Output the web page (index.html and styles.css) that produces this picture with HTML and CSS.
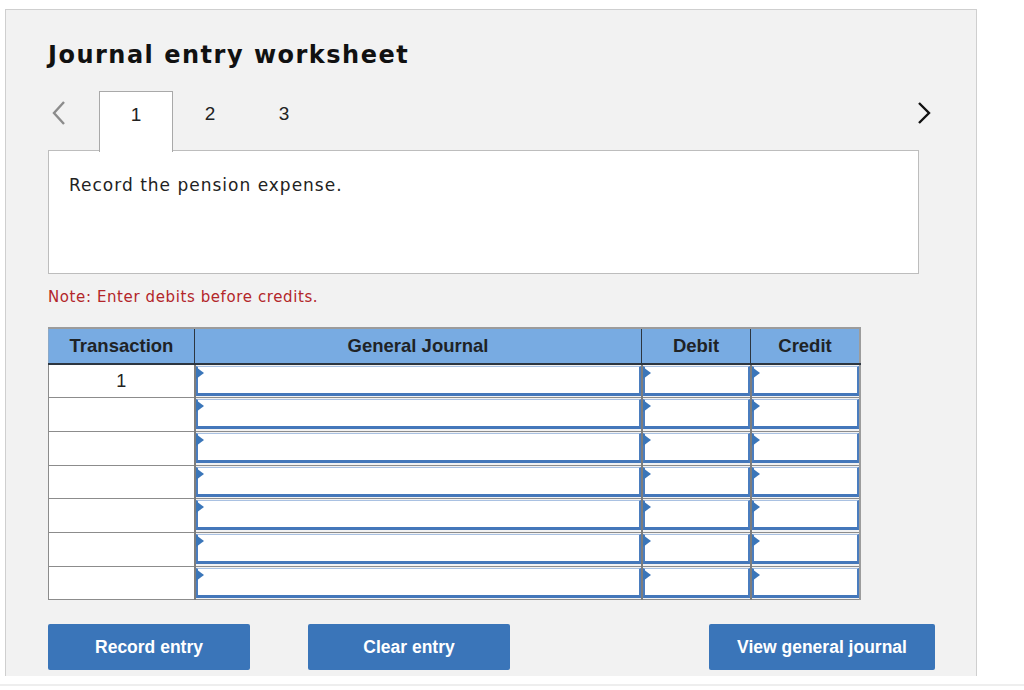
FILE: index.html
```html
<!DOCTYPE html>
<html>
<head>
<meta charset="utf-8">
<title>Journal entry worksheet</title>
<link rel="stylesheet" href="styles.css">
</head>
<body>
<div class="panel">
  <h1 class="title">Journal entry worksheet</h1>

  <div class="tabs">
    <span class="nav nav_prev">
      <svg width="18" height="26" viewBox="0 0 18 26"><path d="M14 2 L4 13 L14 24" fill="none" stroke="#8c8c8c" stroke-width="2.4"/></svg>
    </span>
    <span class="tab tab_on">1</span>
    <span class="tab">2</span>
    <span class="tab">3</span>
    <span class="nav nav_next">
      <svg width="16" height="24" viewBox="0 0 16 24"><path d="M3 2 L13 12 L3 22" fill="none" stroke="#111" stroke-width="2.4"/></svg>
    </span>
  </div>

  <div class="question">Record the pension expense.</div>

  <p class="note">Note: Enter debits before credits.</p>

  <table class="journal">
    <thead>
      <tr>
        <th class="c_trans">Transaction</th>
        <th class="c_gj">General Journal</th>
        <th class="c_amt">Debit</th>
        <th class="c_amt">Credit</th>
      </tr>
    </thead>
    <tbody>
      <tr><td class="trans">1</td><td class="entry"><div class="field"></div></td><td class="entry"><div class="field"></div></td><td class="entry"><div class="field"></div></td></tr>
      <tr><td class="trans"></td><td class="entry"><div class="field"></div></td><td class="entry"><div class="field"></div></td><td class="entry"><div class="field"></div></td></tr>
      <tr><td class="trans"></td><td class="entry"><div class="field"></div></td><td class="entry"><div class="field"></div></td><td class="entry"><div class="field"></div></td></tr>
      <tr><td class="trans"></td><td class="entry"><div class="field"></div></td><td class="entry"><div class="field"></div></td><td class="entry"><div class="field"></div></td></tr>
      <tr><td class="trans"></td><td class="entry"><div class="field"></div></td><td class="entry"><div class="field"></div></td><td class="entry"><div class="field"></div></td></tr>
      <tr><td class="trans"></td><td class="entry"><div class="field"></div></td><td class="entry"><div class="field"></div></td><td class="entry"><div class="field"></div></td></tr>
      <tr><td class="trans"></td><td class="entry"><div class="field"></div></td><td class="entry"><div class="field"></div></td><td class="entry"><div class="field"></div></td></tr>
    </tbody>
  </table>

  <div class="buttons">
    <button class="btn btn_record" type="button">Record entry</button>
    <button class="btn btn_clear" type="button">Clear entry</button>
    <button class="btn btn_view" type="button">View general journal</button>
  </div>
</div>
<div class="page_rule"></div>
</body>
</html>
```

FILE: styles.css
```css
body {
	margin:0;
	background:#fff;
	font-family:"DejaVu Sans", Verdana, sans-serif;
	color:#111;
}
.panel {
	margin:9px 0 0 5px;
	width:928px;
	height:624px;
	padding:0 0 42px 42px;
	background:#f2f2f2;
	border:1px solid #cfcfcf;
	border-bottom:0;
}
.title {
	margin:0;
	padding-top:30px;
	font-size:24px;
	font-weight:bold;
	line-height:30px;
	letter-spacing:1.5px;
	color:#111;
}
.tabs {
	display:flex;
	align-items:flex-start;
	margin-top:21px;
	width:872px;
	height:60px;
}
.nav { display:flex; }
.nav_prev { margin-left:2px; width:49px; padding-top:9px; }
.nav_next { margin-left:auto; margin-right:-12px; padding-top:10px; }
.tab {
	width:74px;
	height:60px;
	line-height:46px;
	text-align:center;
	font-family:"Liberation Sans", Arial, sans-serif;
	font-size:19px;
	color:#222;
	box-sizing:border-box;
}
.tab_on {
	background:#fff;
	border:1px solid #a9a9a9;
	border-bottom:0;
	position:relative;
	z-index:1;
	height:61px;
}
.question {
	margin-top:-1px;
	width:849px;
	height:98px;
	padding:24px 0 0 20px;
	background:#fff;
	border:1px solid #bdbdbd;
	font-size:17px;
	letter-spacing:1px;
	color:#222;
}
.note {
	margin:13px 0 0;
	font-size:15px;
	line-height:20px;
	letter-spacing:0.6px;
	color:#b3262a;
}
.journal {
	margin-top:20px;
	border-collapse:collapse;
	border-top:2px solid #9c9c9c;
	border-right:2px solid #9c9c9c;
	font-family:"Liberation Sans", Arial, sans-serif;
}
.journal th {
	height:34px;
	padding:0;
	background:#78abe2;
	border-left:1px solid #2d3640;
	border-bottom:2px solid #2d3640;
	font-size:18.5px;
	font-weight:bold;
	color:#1f2326;
}
.journal th:first-child { border-left:1px solid #8aa9c9; }
.c_trans { width:145px; }
.c_gj { width:446px; }
.c_amt { width:108px; }
.journal tbody tr { height:33.7px; }
.journal td {
	padding:0;
	background:#fff;
	border:1px solid #8c8c8c;
	border-top:1px solid #9a9a9a;
}
.trans {
	text-align:center;
	font-size:18px;
	color:#222;
}
.journal td.entry {
	background:#f2f2f2;
	border-left:2px solid #7d7d7d;
	border-right:0;
	vertical-align:top;
}
.field {
	position:relative;
	height:26px;
	margin:1px 0 0 0;
	background:#fff;
	border:2px solid #4a7dbf;
	border-top:1px solid #a9c1e2;
	border-bottom:3px solid #4477ba;
}
.field:before {
	content:"";
	position:absolute;
	left:-2px;
	top:0;
	border-left:8px solid #3b76b9;
	border-top:6px solid transparent;
	border-bottom:6px solid transparent;
}
.buttons {
	display:flex;
	margin-top:24px;
	width:887px;
}
.btn {
	height:46px;
	padding:0;
	background:#3a75b9;
	border:0;
	border-radius:2px;
	color:#fff;
	font-family:"Liberation Sans", Arial, sans-serif;
	font-size:17.5px;
	font-weight:bold;
}
.btn_record { width:202px; }
.btn_clear { width:202px; margin-left:58px; }
.btn_view { width:226px; margin-left:auto; }
.page_rule {
	margin-top:8px;
	height:2px;
	background:#eeeeee;
}
```
